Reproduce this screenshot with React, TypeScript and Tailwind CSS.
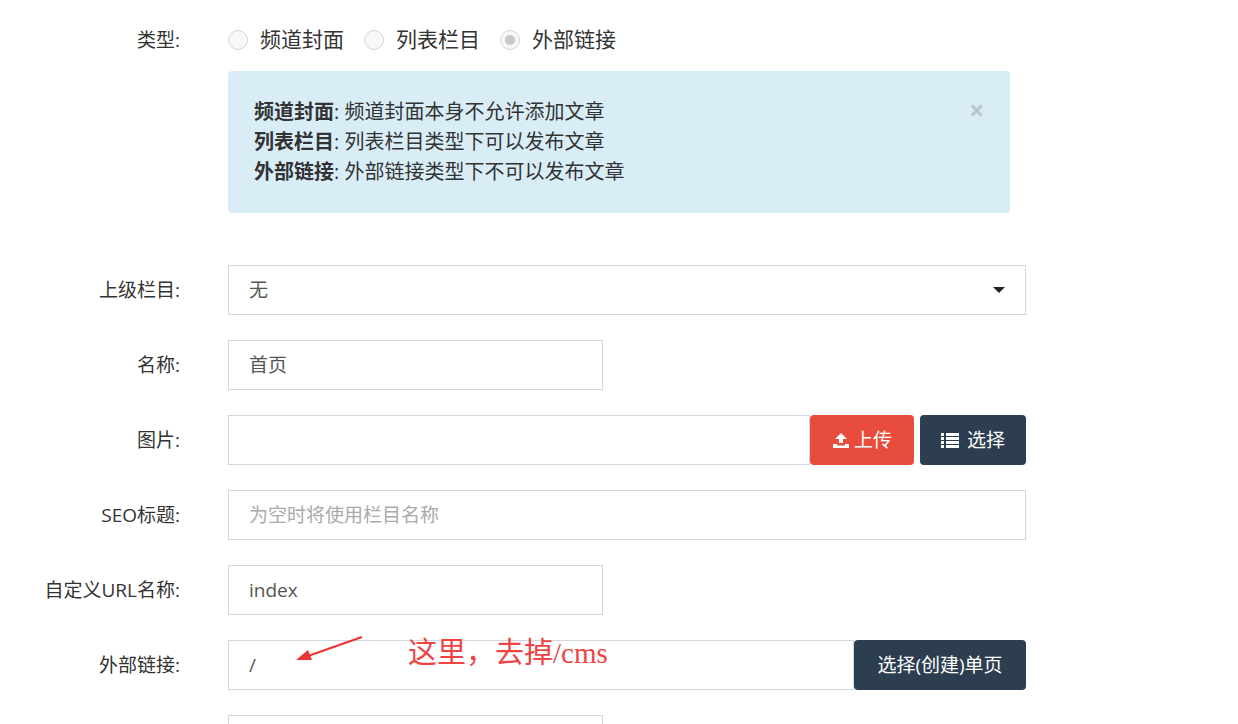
import React from "react"

const font = { fontFamily: '"Open Sans", "Liberation Sans", "Noto Sans CJK SC", sans-serif' }

function Row({ label, children }: { label: string; children: React.ReactNode }) {
  return (
    <div className="flex items-center h-[50px] mb-[25px]">
      <label className="w-[180px] text-right text-[19px] text-[#333] shrink-0">{label}</label>
      <div className="ml-[48px] flex items-center relative">{children}</div>
    </div>
  )
}

const inputCls = "h-[50px] border border-[#d2d6de] px-5 text-[19px] text-[#555] flex items-center bg-white"

function Radio({ checked, label }: { checked?: boolean; label: string }) {
  return (
    <span className="flex items-center mr-5">
      <span className="w-[20px] h-[20px] rounded-full border border-[#d5d5d5] bg-[#f7f7f7] flex items-center justify-center">
        {checked && <span className="w-[10px] h-[10px] rounded-full bg-[#c8c8c8]" />}
      </span>
      <span className="ml-[12px] text-[21px] text-[#333]">{label}</span>
    </span>
  )
}

export default function App() {
  return (
    <div className="w-[1238px] h-[724px] bg-white overflow-hidden pt-[15px]" style={font}>
      <div className="flex items-center h-[50px]">
        <label className="w-[180px] text-right text-[19px] text-[#333]">类型:</label>
        <div className="ml-[48px] flex items-center">
          <Radio label="频道封面" />
          <Radio label="列表栏目" />
          <Radio checked label="外部链接" />
        </div>
      </div>
      <div className="ml-[228px] mt-[6px] w-[782px] h-[142px] bg-[#d9edf7] rounded-[4px] pl-[26px] pt-[26px] relative text-[20px] leading-[30px] text-[#333]">
        <span className="absolute right-[26px] top-[24px] text-[26px] text-[#b8c4cc] font-bold">×</span>
        <div><b>频道封面</b>: 频道封面本身不允许添加文章</div>
        <div><b>列表栏目</b>: 列表栏目类型下可以发布文章</div>
        <div><b>外部链接</b>: 外部链接类型下不可以发布文章</div>
      </div>
      <div className="mt-[52px]">
        <Row label="上级栏目:">
          <div className={inputCls + " w-[798px] justify-between"}>
            <span>无</span>
            <span className="w-0 h-0 border-l-[6px] border-r-[6px] border-t-[6px] border-l-transparent border-r-transparent border-t-[#222]" />
          </div>
        </Row>
        <Row label="名称:">
          <div className={inputCls + " w-[375px]"}>首页</div>
        </Row>
        <Row label="图片:">
          <div className={inputCls + " w-[582px]"} />
          <button className="h-[50px] w-[104px] bg-[#e74c3c] text-white text-[19px] rounded-[4px] flex items-center justify-center gap-1">
            <svg width="18" height="16" viewBox="0 0 18 16" fill="white">
              <path d="M9 1 L15 7 H11 V11 H7 V7 H3 Z" />
              <path d="M1 12 H5 V13.5 H13 V12 H17 V16 H1 Z" />
            </svg>
            上传
          </button>
          <button className="ml-[6px] h-[50px] w-[106px] bg-[#2c3e50] text-white text-[19px] rounded-[4px] flex items-center justify-center gap-2">
            <svg width="18" height="15" viewBox="0 0 18 15" fill="white">
              <rect x="0" y="0" width="3" height="3" /><rect x="5" y="0" width="13" height="3" />
              <rect x="0" y="4" width="3" height="3" /><rect x="5" y="4" width="13" height="3" />
              <rect x="0" y="8" width="3" height="3" /><rect x="5" y="8" width="13" height="3" />
              <rect x="0" y="12" width="3" height="3" /><rect x="5" y="12" width="13" height="3" />
            </svg>
            选择
          </button>
        </Row>
        <Row label="SEO标题:">
          <div className={inputCls + " w-[798px] text-[#aaa]"}>为空时将使用栏目名称</div>
        </Row>
        <Row label="自定义URL名称:">
          <div className={inputCls + " w-[375px]"}>index</div>
        </Row>
        <Row label="外部链接:">
          <div className={inputCls + " w-[626px]"}>/</div>
          <button className="h-[50px] w-[172px] bg-[#2c3e50] text-white text-[19px] rounded-[4px]">选择(创建)单页</button>
          <svg className="absolute left-[66px] top-[-4px]" width="70" height="30" viewBox="0 0 70 30">
            <path d="M68 1 L14 20" stroke="#ee3333" strokeWidth="2" fill="none" />
            <path d="M2 24 L14 14 L18 24 Z" fill="#ee3333" />
          </svg>
          <span className="absolute left-[180px] top-[-8px] text-[29px] text-[#ee4444]" style={{ fontFamily: '"Liberation Serif", "Noto Sans CJK SC", serif' }}>这里，去掉/cms</span>
        </Row>
        <Row label="">
          <div className={inputCls + " w-[375px]"} />
        </Row>
      </div>
    </div>
  )
}
